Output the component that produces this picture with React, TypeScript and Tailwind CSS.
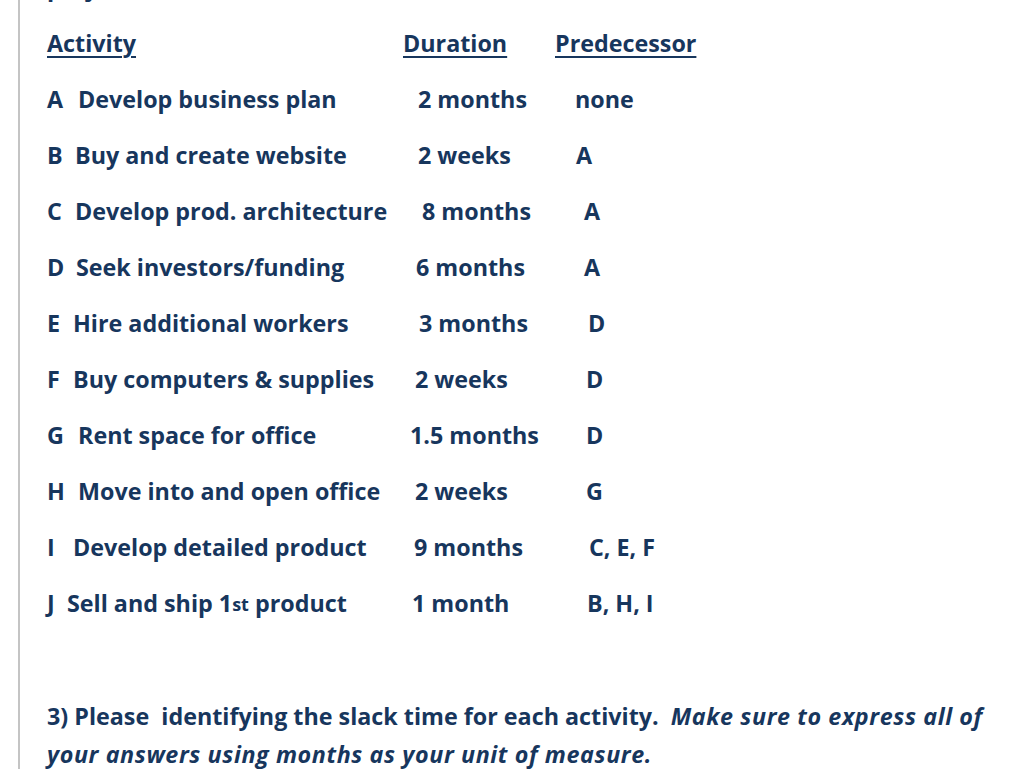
import React from "react";

type Row = {
  letter: string;
  desc: React.ReactNode;
  letterW: string;
  dur: string;
  durPad: string;
  pred: string;
  predPad: string;
};

const rows: Row[] = [
  { letter: "A", desc: "Develop business plan", letterW: "w-[31px]", dur: "2 months", durPad: "pl-[15px]", pred: "none", predPad: "pl-[20px]" },
  { letter: "B", desc: "Buy and create website", letterW: "w-[28px]", dur: "2 weeks", durPad: "pl-[15px]", pred: "A", predPad: "pl-[21px]" },
  { letter: "C", desc: "Develop prod. architecture", letterW: "w-[28px]", dur: "8 months", durPad: "pl-[19px]", pred: "A", predPad: "pl-[29px]" },
  { letter: "D", desc: "Seek investors/funding", letterW: "w-[29px]", dur: "6 months", durPad: "pl-[13px]", pred: "A", predPad: "pl-[29px]" },
  { letter: "E", desc: "Hire additional workers", letterW: "w-[26px]", dur: "3 months", durPad: "pl-[16px]", pred: "D", predPad: "pl-[33px]" },
  { letter: "F", desc: "Buy computers & supplies", letterW: "w-[26px]", dur: "2 weeks", durPad: "pl-[12px]", pred: "D", predPad: "pl-[31px]" },
  { letter: "G", desc: "Rent space for office", letterW: "w-[31px]", dur: "1.5 months", durPad: "pl-[7px]", pred: "D", predPad: "pl-[31px]" },
  { letter: "H", desc: "Move into and open office", letterW: "w-[31px]", dur: "2 weeks", durPad: "pl-[12px]", pred: "G", predPad: "pl-[31px]" },
  { letter: "I", desc: "Develop detailed product", letterW: "w-[26px]", dur: "9 months", durPad: "pl-[11px]", pred: "C, E, F", predPad: "pl-[34px]" },
  {
    letter: "J",
    desc: (
      <>
        Sell and ship 1<sup className="text-[18px] relative top-[-1px]">st</sup> product
      </>
    ),
    letterW: "w-[20px]",
    dur: "1 month",
    durPad: "pl-[9px]",
    pred: "B, H, I",
    predPad: "pl-[32px]",
  },
];

export default function App() {
  return (
    <div
      className="w-[1024px] h-[769px] overflow-hidden bg-white text-[#17365d] font-bold text-[23.3px]"
      style={{ fontFamily: '"Open Sans", "Noto Sans", sans-serif' }}
    >
      <div className="ml-[18px] h-full flex flex-col border-l-2 border-[#c4c4c4] pl-[27px]">
        <div className="mt-[-41px]">
          <div className="h-[56px] flex items-center">project</div>
          <div className="h-[56px] grid grid-cols-[356px_152px_1fr] items-center">
            <div>
              <span className="underline decoration-2 underline-offset-[4px]">Activity</span>
            </div>
            <div>
              <span className="underline decoration-2 underline-offset-[4px]">Duration</span>
            </div>
            <div>
              <span className="underline decoration-2 underline-offset-[4px]">Predecessor</span>
            </div>
          </div>
          {rows.map((r) => (
            <div key={r.letter} className="h-[56px] grid grid-cols-[356px_152px_1fr] items-center whitespace-nowrap">
              <div className="flex">
                <span className={r.letterW}>{r.letter}</span>
                <span>{r.desc}</span>
              </div>
              <div className={r.durPad}>{r.dur}</div>
              <div className={r.predPad}>{r.pred}</div>
            </div>
          ))}
        </div>
        <p className="mt-[66px] leading-[38px] w-[955px]">
          3) Please&nbsp; identifying the slack time for each activity.&nbsp;{" "}
          <em className="italic tracking-[0.6px]">Make sure to express all of your answers using months as your unit of measure.</em>
        </p>
      </div>
    </div>
  );
}
